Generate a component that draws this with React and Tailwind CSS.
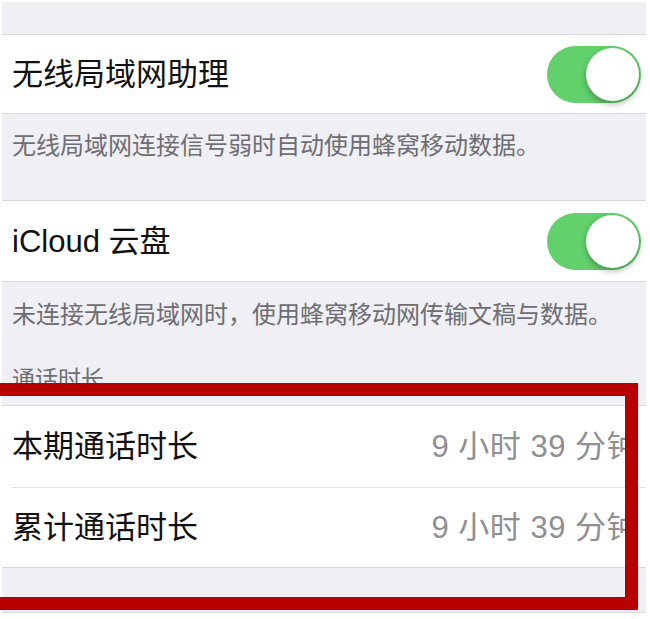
import React from "react";

const font = { fontFamily: '"Liberation Sans", "Noto Sans CJK SC", sans-serif' };

function Toggle() {
  return (
    <div className="flex h-[57px] w-[94px] items-center justify-end rounded-full bg-[#62d06b] p-[2px]">
      <div className="h-[53px] w-[53px] rounded-full bg-white shadow-[0_3px_6px_rgba(0,0,0,0.3)]" />
    </div>
  );
}

function SwitchRow({ title, height = "h-[78px]" }) {
  return (
    <div className={`flex ${height} items-center justify-between border-y border-[#dadade] bg-white pl-[10px] pr-[5px]`}>
      <span className="text-[31px] leading-none text-[#111]">{title}</span>
      <Toggle />
    </div>
  );
}

function ValueRow({ title, value, height }) {
  return (
    <div className={`flex ${height} items-center justify-between pl-[10px] pr-[8px]`}>
      <span className="text-[31px] leading-none text-[#111]">{title}</span>
      <span className="text-[31px] leading-none tracking-[0.5px] text-[#8e8e93]">{value}</span>
    </div>
  );
}

export default function App() {
  return (
    <div className="relative h-[619px] w-[650px] overflow-hidden bg-white" style={font}>
      <div className="ml-[2px] mt-[2px] flex h-[611px] w-[644px] flex-col overflow-hidden border-b border-[#dcdce0] bg-[#efeff4]">
        <div className="h-[32px] shrink-0" />
        <SwitchRow title="无线局域网助理" height="h-[80px]" />
        <div className="h-[86px] shrink-0 pl-[10px] pt-[16px]">
          <p className="text-[24px] leading-[32px] text-[#6d6d72]">无线局域网连接信号弱时自动使用蜂窝移动数据。</p>
        </div>
        <SwitchRow title="iCloud 云盘" height="h-[82px]" />
        <div className="h-[123px] shrink-0 pl-[10px] pt-[17px]">
          <p className="text-[24px] leading-[32px] text-[#6d6d72]">未连接无线局域网时，使用蜂窝移动网传输文稿与数据。</p>
          <p className="mt-[32px] text-[23px] leading-[32px] text-[#6d6d72]">通话时长</p>
        </div>
        <div className="shrink-0 border-y border-[#dadade] bg-white">
          <ValueRow title="本期通话时长" value="9 小时 39 分钟" height="h-[81px]" />
          <div className="ml-[10px] h-px bg-[#e0e0e4]" />
          <ValueRow title="累计通话时长" value="9 小时 39 分钟" height="h-[79px]" />
        </div>
      </div>
      <div className="pointer-events-none absolute left-[-20px] top-[383px] h-[227px] w-[658px] border-[13px] border-[#b80000]" />
    </div>
  );
}
